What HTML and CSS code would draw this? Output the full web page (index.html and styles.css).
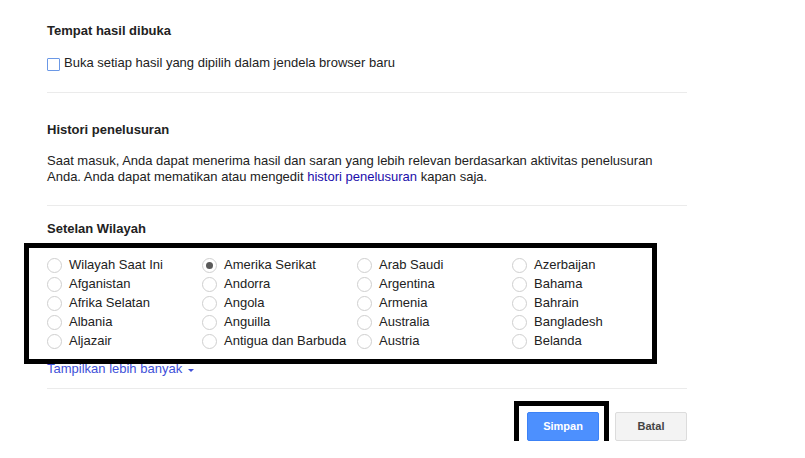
FILE: index.html
```html
<!DOCTYPE html>
<html lang="id">
<head>
    <meta charset="UTF-8">
    <meta name="viewport" content="width=device-width, initial-scale=1.0">
    <title>Setelan penelusuran</title>
    <link rel="stylesheet" href="styles.css">
</head>
<body>
    <div class="page">
        <div class="section section_open">
            <div class="title">Tempat hasil dibuka</div>
            <label class="check_row">
                <span class="check_box"></span>
                <span>Buka setiap hasil yang dipilih dalam jendela browser baru</span>
            </label>
        </div>

        <div class="section section_history">
            <div class="title">Histori penelusuran</div>
            <p class="desc">Saat masuk, Anda dapat menerima hasil dan saran yang lebih relevan berdasarkan aktivitas penelusuran<br>Anda. Anda dapat mematikan atau mengedit <a href="#" class="link">histori penelusuran</a> kapan saja.</p>
        </div>

        <div class="section section_region">
            <div class="title">Setelan Wilayah</div>
            <div class="region_grid">
                <div class="radio_item"><span class="radio"></span>Wilayah Saat Ini</div>
                <div class="radio_item"><span class="radio checked"></span>Amerika Serikat</div>
                <div class="radio_item"><span class="radio"></span>Arab Saudi</div>
                <div class="radio_item"><span class="radio"></span>Azerbaijan</div>
                <div class="radio_item"><span class="radio"></span>Afganistan</div>
                <div class="radio_item"><span class="radio"></span>Andorra</div>
                <div class="radio_item"><span class="radio"></span>Argentina</div>
                <div class="radio_item"><span class="radio"></span>Bahama</div>
                <div class="radio_item"><span class="radio"></span>Afrika Selatan</div>
                <div class="radio_item"><span class="radio"></span>Angola</div>
                <div class="radio_item"><span class="radio"></span>Armenia</div>
                <div class="radio_item"><span class="radio"></span>Bahrain</div>
                <div class="radio_item"><span class="radio"></span>Albania</div>
                <div class="radio_item"><span class="radio"></span>Anguilla</div>
                <div class="radio_item"><span class="radio"></span>Australia</div>
                <div class="radio_item"><span class="radio"></span>Bangladesh</div>
                <div class="radio_item"><span class="radio"></span>Aljazair</div>
                <div class="radio_item"><span class="radio"></span>Antigua dan Barbuda</div>
                <div class="radio_item"><span class="radio"></span>Austria</div>
                <div class="radio_item"><span class="radio"></span>Belanda</div>
            </div>
            <a href="#" class="more_link">Tampilkan lebih banyak<span class="caret"></span></a>
        </div>

        <div class="buttons">
            <div class="btn btn_save">Simpan</div>
            <div class="btn btn_cancel">Batal</div>
        </div>
    </div>

    <div class="mark mark_region"></div>
    <div class="mark mark_save"></div>
</body>
</html>
```

FILE: styles.css
```css
body
{
    margin: 0;
    position: relative;
    font-family: "Liberation Sans", Arial, sans-serif;
    font-size: 13px;
    color: #222;
    background-color: #fff;
}
.page
{
    width: 640px;
    padding-left: 47px;
}
.section
{
    border-bottom: 1px solid #ebebeb;
}
.title
{
    font-weight: bold;
    line-height: 16px;
}
.section_open
{
    padding: 23px 0 21px 0;
}
.check_row
{
    display: flex;
    align-items: flex-start;
    margin-top: 16px;
    line-height: 16px;
}
.check_box
{
    width: 11px;
    height: 11px;
    margin-top: 3px;
    margin-right: 4px;
    border: 1px solid #6b98e6;
    border-radius: 1px;
    background-color: #fff;
}
.section_history
{
    padding: 29px 0 20px 0;
}
.desc
{
    margin: 15px 0 0 0;
    line-height: 16px;
}
.link
{
    color: #1a0dab;
    text-decoration: none;
}
.section_region
{
    padding: 15px 0 11px 0;
}
.region_grid
{
    display: grid;
    grid-template-columns: repeat(4, 155px);
    margin-top: 18px;
}
.radio_item
{
    display: flex;
    align-items: center;
    height: 19px;
    white-space: nowrap;
}
.radio
{
    position: relative;
    width: 13px;
    height: 13px;
    margin-top: 2px;
    margin-right: 7px;
    border: 1px solid #cfcfcf;
    border-radius: 50%;
    background-color: #fff;
    flex-shrink: 0;
}
.radio.checked::after
{
    content: "";
    position: absolute;
    top: 3px;
    left: 3px;
    width: 7px;
    height: 7px;
    border-radius: 50%;
    background-color: #5a5a5a;
}
.more_link
{
    display: inline-flex;
    align-items: center;
    margin-top: 11px;
    line-height: 16px;
    color: #4050d8;
    text-decoration: none;
}
.caret
{
    margin-left: 6px;
    margin-top: 2px;
    border-left: 3px solid transparent;
    border-right: 3px solid transparent;
    border-top: 3px solid #4050d8;
}
.buttons
{
    display: flex;
    justify-content: flex-end;
    gap: 16px;
    padding-top: 23px;
}
.btn
{
    box-sizing: border-box;
    width: 72px;
    height: 29px;
    line-height: 27px;
    text-align: center;
    font-size: 11px;
    font-weight: bold;
    border-radius: 2px;
}
.btn_save
{
    background-color: #4d90fe;
    border: 1px solid #3c82f6;
    color: #fff;
}
.btn_cancel
{
    background-color: #f3f3f3;
    border: 1px solid #dcdcdc;
    color: #444;
}
/* black highlight frames drawn over the screenshot */
.mark
{
    position: absolute;
    border: 5px solid #000;
    box-sizing: border-box;
}
.mark_region
{
    left: 24px;
    top: 243px;
    width: 633px;
    height: 121px;
}
.mark_save
{
    left: 514px;
    top: 401px;
    width: 95px;
    height: 52px;
}
```
